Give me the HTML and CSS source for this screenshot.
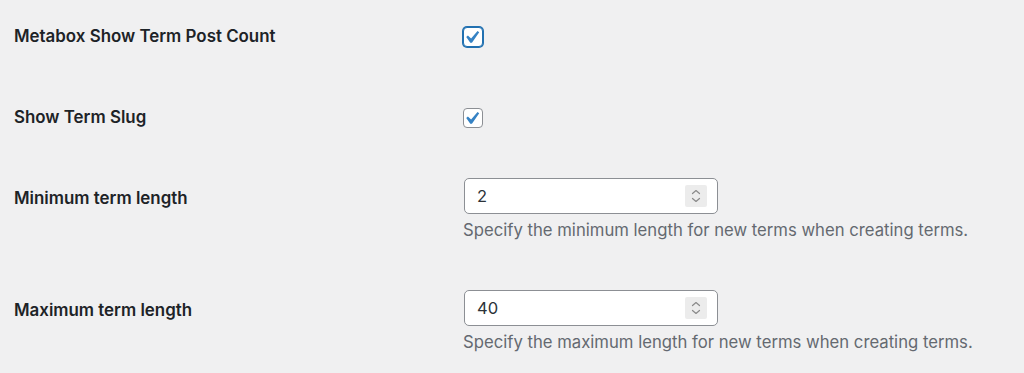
FILE: index.html
```html
<!DOCTYPE html>
<html lang="en">
<head>
<meta charset="utf-8">
<title>Settings</title>
<link rel="stylesheet" href="styles.css">
</head>
<body>
<div class="form">
  <div class="row row-check">
    <div class="label">Metabox Show Term Post Count</div>
    <div class="control">
      <span class="checkbox is-focused" role="checkbox" aria-checked="true">
        <svg class="check" viewBox="0 0 20 20"><path d="M14.83 4.89l1.34.94-5.81 8.38H9.02L5.78 9.67l1.34-1.25 2.57 2.4z"/></svg>
      </span>
    </div>
  </div>
  <div class="row row-check">
    <div class="label">Show Term Slug</div>
    <div class="control">
      <span class="checkbox" role="checkbox" aria-checked="true">
        <svg class="check" viewBox="0 0 20 20"><path d="M14.83 4.89l1.34.94-5.81 8.38H9.02L5.78 9.67l1.34-1.25 2.57 2.4z"/></svg>
      </span>
    </div>
  </div>
  <div class="row row-input">
    <div class="label">Minimum term length</div>
    <div class="control">
      <div class="field">
        <input class="field-input" type="text" value="2">
        <span class="stepper">
          <svg viewBox="0 0 22 22"><path d="M7.5 8.5 11 5.5l3.5 3M7.5 13.5l3.5 3 3.5-3"/></svg>
        </span>
      </div>
      <p class="desc">Specify the minimum length for new terms when creating terms.</p>
    </div>
  </div>
  <div class="row row-input">
    <div class="label">Maximum term length</div>
    <div class="control">
      <div class="field">
        <input class="field-input" type="text" value="40">
        <span class="stepper">
          <svg viewBox="0 0 22 22"><path d="M7.5 8.5 11 5.5l3.5 3M7.5 13.5l3.5 3 3.5-3"/></svg>
        </span>
      </div>
      <p class="desc">Specify the maximum length for new terms when creating terms.</p>
    </div>
  </div>
</div>
</body>
</html>
```

FILE: styles.css
```css
html, body {
  margin: 0;
  padding: 0;
  background: #f0f0f1;
}
body {
  font-family: Inter, "Noto Sans", "Liberation Sans", sans-serif;
  font-size: 16px;
  color: #1d2327;
}
.form {
  padding-left: 14px;
}
.row {
  display: grid;
  grid-template-columns: 449px 1fr;
  box-sizing: border-box;
}
.row-check { height: 81px; }
.row-input { height: 112px; }
.label {
  padding-top: 25px;
  line-height: 22px;
  font-weight: 600;
  font-size: 16.9px;
  color: #1d2327;
}
.row-check .control { padding-top: 27px; }
.row-input .control { padding-top: 16px; }

.checkbox {
  display: block;
  width: 20px;
  height: 20px;
  box-sizing: border-box;
  border: 1px solid #8c8f94;
  border-radius: 4px;
  background: #fff;
}
.checkbox.is-focused {
  border-color: #2271b1;
  box-shadow: 0 0 0 1px #2271b1;
}
.check {
  display: block;
  width: 25px;
  height: 25px;
  margin: -3px 0 0 -5px;
  fill: #3582c4;
}

.field {
  display: flex;
  align-items: center;
  width: 254px;
  height: 36px;
  margin-left: 1px;
  box-sizing: border-box;
  border: 1px solid #8c8f94;
  border-radius: 5px;
  background: #fff;
  padding: 0 10px 0 12px;
}
.field-input {
  flex: 1;
  min-width: 0;
  border: 0;
  outline: 0;
  padding: 0;
  margin: 0;
  background: transparent;
  font-family: inherit;
  font-size: 16.5px;
  color: #2c3338;
  line-height: 22px;
}
.stepper {
  display: block;
  width: 22px;
  height: 22px;
  background: #ececec;
  border-radius: 2px;
}
.stepper svg {
  display: block;
  width: 22px;
  height: 22px;
  fill: none;
  stroke: #8a8a8a;
  stroke-width: 1.2;
  stroke-linecap: round;
  stroke-linejoin: round;
}
.desc {
  margin: 4px 0 0;
  line-height: 24px;
  font-size: 16.7px;
  color: #646970;
}
```
